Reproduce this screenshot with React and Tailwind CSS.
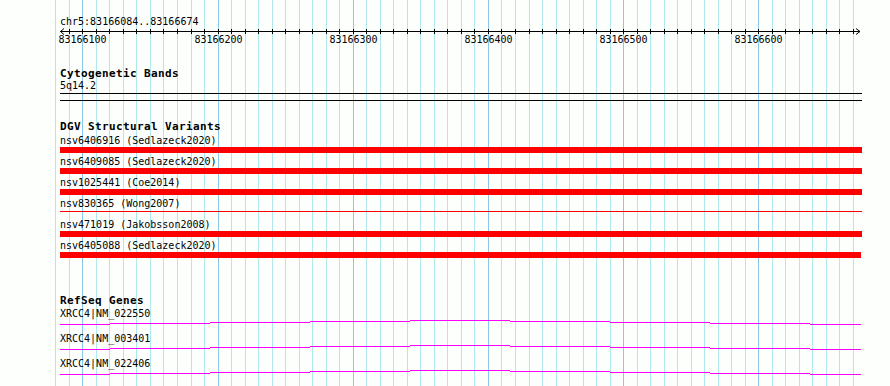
import React from "react";

// one grid line / tick every 10 bp, darker every 100 bp
const GRID = Array.from({ length: 60 }, (_, k) => ({
  x: Math.round(55.3 + k * 13.52),
  major: k % 10 === 2,
}));

const LABELS = [
  { k: 2, text: "83166100" },
  { k: 12, text: "83166200" },
  { k: 22, text: "83166300" },
  { k: 32, text: "83166400" },
  { k: 42, text: "83166500" },
  { k: 52, text: "83166600" },
];

const VARIANTS = [
  { name: "nsv6406916 (Sedlazeck2020)", thin: false, w: 802 },
  { name: "nsv6409085 (Sedlazeck2020)", thin: false, w: 802 },
  { name: "nsv1025441 (Coe2014)", thin: false, w: 802 },
  { name: "nsv830365 (Wong2007)", thin: true, w: 802 },
  { name: "nsv471019 (Jakobsson2008)", thin: false, w: 802 },
  { name: "nsv6405088 (Sedlazeck2020)", thin: false, w: 801 },
];

const GENES = ["XRCC4|NM_022550", "XRCC4|NM_003401", "XRCC4|NM_022406"];

// stepped intron line, x relative to the track start (page x 60)
const STEPS = [
  [0, 50, 4],
  [50, 150, 3],
  [150, 250, 2],
  [250, 350, 1],
  [350, 450, 0],
  [450, 550, 1],
  [550, 650, 2],
  [650, 750, 3],
  [750, 801, 4],
];

function Heading({ children }) {
  return (
    <div className="h-3 leading-[12px] text-[11px] font-bold tracking-[0.38px] whitespace-nowrap">
      {children}
    </div>
  );
}

function Label({ children }) {
  return <div className="h-3 leading-[12px] text-[10px] whitespace-nowrap">{children}</div>;
}

function Ruler() {
  return (
    <svg width="802" height="18" className="block overflow-visible" shapeRendering="crispEdges">
      <line x1="0" y1="3.5" x2="800" y2="3.5" stroke="#000" />
      {GRID.slice(1).map((g) => (
        <line key={g.x} x1={g.x - 60 + 0.5} y1="1" x2={g.x - 60 + 0.5} y2="6" stroke="#000" />
      ))}
      <polyline points="4,0.5 0.5,3.5 4,6.5" fill="none" stroke="#000" shapeRendering="auto" />
      <polyline points="796,0.5 800,3.5 796,6.5" fill="none" stroke="#000" shapeRendering="auto" />
      {LABELS.map((l) => (
        <text
          key={l.k}
          x={GRID[l.k].x - 60 + 0.5}
          y="15"
          textAnchor="middle"
          fontSize="10"
          fontFamily="'DejaVu Sans Mono', monospace"
          fill="#000"
        >
          {l.text}
        </text>
      ))}
    </svg>
  );
}

function GeneLine() {
  return (
    <svg width="802" height="13" className="block" shapeRendering="crispEdges">
      {STEPS.map(([a, b, y]) => (
        <line key={a} x1={a} y1={y + 0.5} x2={b} y2={y + 0.5} stroke="#ff00ff" />
      ))}
    </svg>
  );
}

export default function App() {
  return (
    <div className="relative w-[890px] h-[386px] overflow-hidden bg-[#fdfffd] text-black font-['DejaVu_Sans_Mono',monospace]">
      <svg className="absolute inset-0" width="890" height="386" shapeRendering="crispEdges">
        {GRID.map((g) => (
          <line
            key={g.x}
            x1={g.x + 0.5}
            y1="0"
            x2={g.x + 0.5}
            y2="386"
            stroke={g.major ? "#8cc8ec" : "#b0e8ee"}
          />
        ))}
      </svg>

      <div className="relative pl-[60px] pt-4 w-[862px]">
        <Label>chr5:83166084..83166674</Label>
        <Ruler />

        <div className="mt-[22px]">
          <Heading>Cytogenetic Bands</Heading>
          <Label>5q14.2</Label>
          <div className="mt-px h-px bg-black" />
          <div className="mt-[6px] h-px bg-black" />
        </div>

        <div className="mt-5">
          <Heading>DGV Structural Variants</Heading>
          <div className="mt-[2px] flex flex-col">
            {VARIANTS.map((v) => (
              <div key={v.name} className="h-[21px]">
                <Label>{v.name}</Label>
                <div className="h-[6px]">
                  {v.thin ? (
                    <div className="mt-px h-px bg-[#ff0000]" style={{ width: v.w }} />
                  ) : (
                    <div className="h-[6px] bg-[#ff0000]" style={{ width: v.w }} />
                  )}
                </div>
              </div>
            ))}
          </div>
        </div>

        <div className="mt-[34px]">
          <Heading>RefSeq Genes</Heading>
          <div className="mt-px flex flex-col">
            {GENES.map((g) => (
              <div key={g} className="h-[25px]">
                <Label>{g}</Label>
                <GeneLine />
              </div>
            ))}
          </div>
        </div>
      </div>
    </div>
  );
}
